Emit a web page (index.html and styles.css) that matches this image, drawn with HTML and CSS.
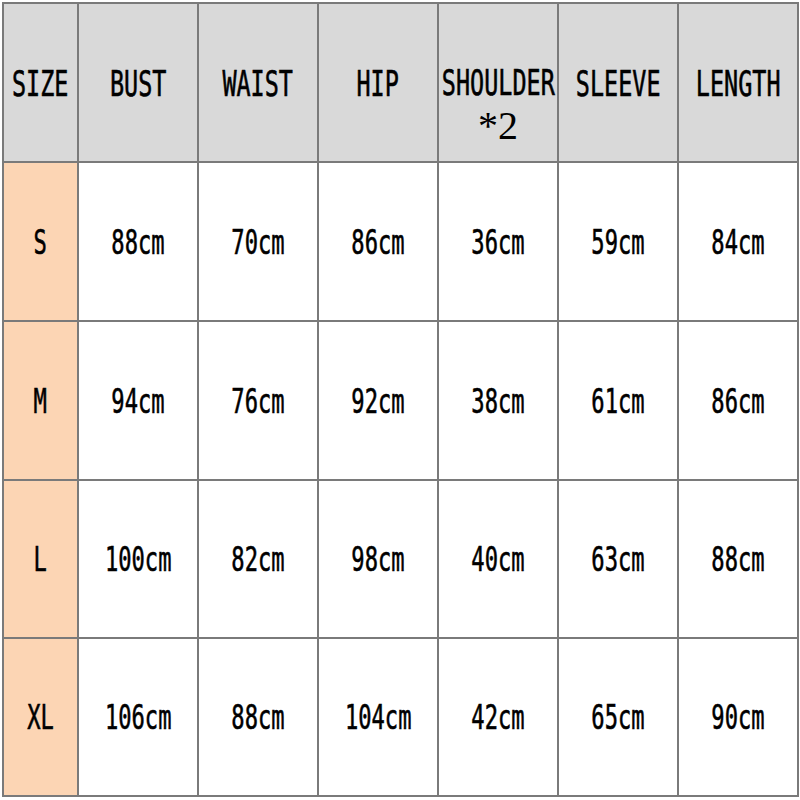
FILE: index.html
```html
<!DOCTYPE html>
<html>
<head>
<meta charset="utf-8">
<link rel="stylesheet" href="styles.css">
</head>
<body>
<div class="chart">
  <div class="cell head"><span class="t">SIZE</span></div>
  <div class="cell head"><span class="t">BUST</span></div>
  <div class="cell head"><span class="t">WAIST</span></div>
  <div class="cell head"><span class="t">HIP</span></div>
  <div class="cell head stack"><span class="t">SHOULDER</span><span class="star">*2</span></div>
  <div class="cell head"><span class="t">SLEEVE</span></div>
  <div class="cell head"><span class="t">LENGTH</span></div>

  <div class="cell size"><span class="v">S</span></div>
  <div class="cell"><span class="v">88cm</span></div>
  <div class="cell"><span class="v">70cm</span></div>
  <div class="cell"><span class="v">86cm</span></div>
  <div class="cell"><span class="v">36cm</span></div>
  <div class="cell"><span class="v">59cm</span></div>
  <div class="cell"><span class="v">84cm</span></div>

  <div class="cell size"><span class="v">M</span></div>
  <div class="cell"><span class="v">94cm</span></div>
  <div class="cell"><span class="v">76cm</span></div>
  <div class="cell"><span class="v">92cm</span></div>
  <div class="cell"><span class="v">38cm</span></div>
  <div class="cell"><span class="v">61cm</span></div>
  <div class="cell"><span class="v">86cm</span></div>

  <div class="cell size"><span class="v">L</span></div>
  <div class="cell"><span class="v">100cm</span></div>
  <div class="cell"><span class="v">82cm</span></div>
  <div class="cell"><span class="v">98cm</span></div>
  <div class="cell"><span class="v">40cm</span></div>
  <div class="cell"><span class="v">63cm</span></div>
  <div class="cell"><span class="v">88cm</span></div>

  <div class="cell size"><span class="v">XL</span></div>
  <div class="cell"><span class="v">106cm</span></div>
  <div class="cell"><span class="v">88cm</span></div>
  <div class="cell"><span class="v">104cm</span></div>
  <div class="cell"><span class="v">42cm</span></div>
  <div class="cell"><span class="v">65cm</span></div>
  <div class="cell"><span class="v">90cm</span></div>
</div>
</body>
</html>
```

FILE: styles.css
```css
html, body {
  margin: 0;
  padding: 0;
  background: #ffffff;
}
.chart {
  margin: 2px 0 0 2px;
  width: 797px;
  box-sizing: border-box;
  display: grid;
  grid-template-columns: 73px repeat(6, 118px);
  grid-template-rows: 157px 157px 157px 156px 156px;
  gap: 2px;
  padding: 2px;
  background: #7a7a7a;
  font-family: "DejaVu Sans Mono", "Liberation Mono", monospace;
  font-weight: normal;
  color: #000;
}
.cell {
  background: #ffffff;
  display: flex;
  align-items: center;
  justify-content: center;
  min-width: 0;
}
.head {
  background: #d9d9d9;
  padding-top: 4px;
}
.size {
  background: #fcd5b4;
}
.stack {
  flex-direction: column;
  justify-content: flex-start;
  padding-top: 62px;
}
.t, .v {
  display: inline-block;
  line-height: 1;
  white-space: nowrap;
  flex: none;
  -webkit-text-stroke: 0.6px #000;
}
.t {
  font-size: 35px;
  transform: scaleX(0.67);
}
.v {
  font-size: 34px;
  transform: scaleX(0.65);
}
.star {
  font-family: "Liberation Serif", serif;
  font-weight: normal;
  font-size: 40px;
  line-height: 1;
  margin-top: 5px;
}
```
